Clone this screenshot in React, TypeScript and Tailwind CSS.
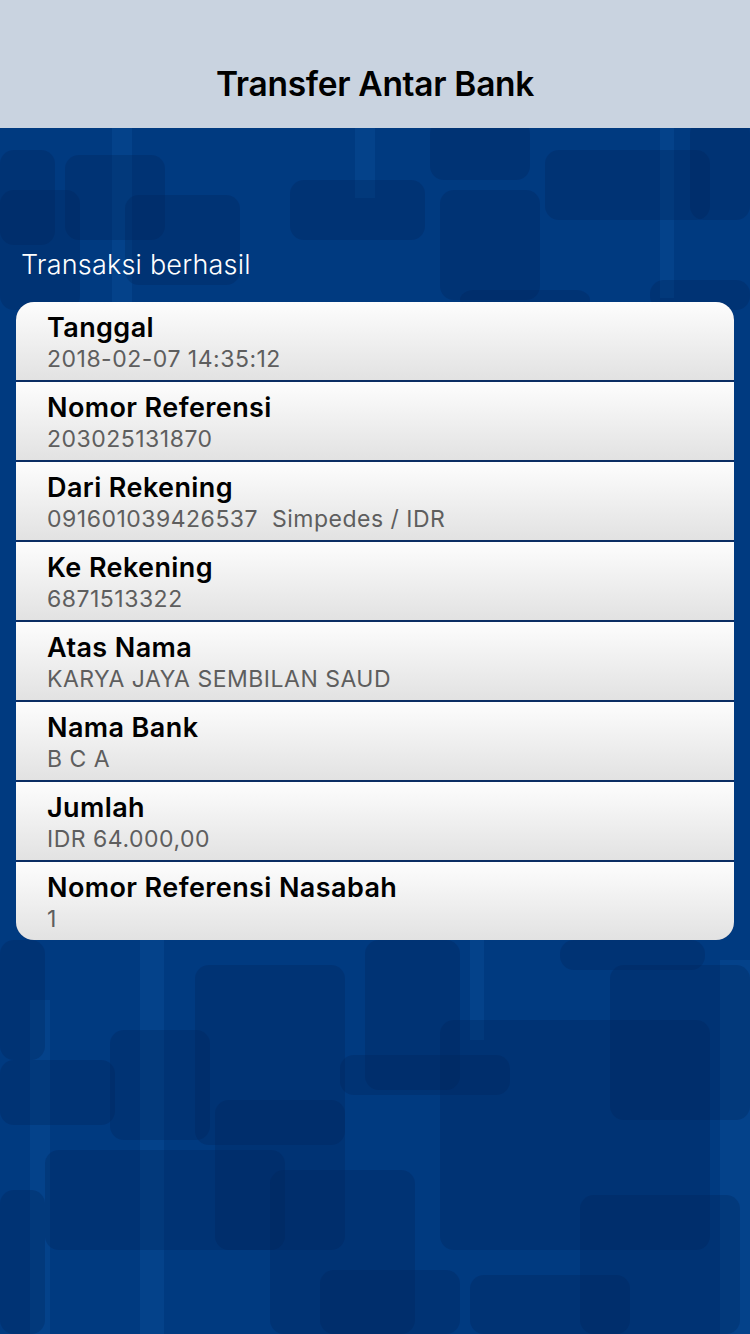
import React from "react";

const rows = [
  { label: "Tanggal", value: "2018-02-07 14:35:12" },
  { label: "Nomor Referensi", value: "203025131870" },
  { label: "Dari Rekening", value: "091601039426537  Simpedes / IDR" },
  { label: "Ke Rekening", value: "6871513322" },
  { label: "Atas Nama", value: "KARYA JAYA SEMBILAN SAUD" },
  { label: "Nama Bank", value: "B C A" },
  { label: "Jumlah", value: "IDR 64.000,00" },
  { label: "Nomor Referensi Nasabah", value: "1" },
];

// decorative tiles of the background artwork: [x, y, w, h]
const darkTiles: number[][] = [
  [0, 150, 55, 95], [65, 155, 100, 85], [0, 190, 80, 120], [125, 195, 115, 90],
  [290, 180, 135, 60], [430, 120, 100, 60], [545, 150, 165, 70], [440, 190, 100, 110],
  [460, 290, 130, 20], [650, 280, 100, 30], [690, 120, 60, 100],
  [0, 940, 45, 120], [195, 965, 150, 180], [340, 1055, 170, 40], [440, 1020, 270, 230],
  [610, 965, 140, 155], [0, 1060, 115, 65], [45, 1150, 240, 100], [215, 1100, 130, 150],
  [270, 1170, 145, 164], [580, 1195, 160, 139], [320, 1270, 140, 64], [470, 1275, 160, 59],
  [0, 1190, 45, 144], [560, 940, 145, 30], [365, 940, 95, 150], [110, 1030, 100, 110],
];

const lightStripes: number[][] = [
  [112, 128, 20, 180], [355, 128, 20, 70], [660, 128, 14, 170],
  [140, 940, 24, 394], [470, 940, 14, 100], [720, 960, 30, 374], [30, 1000, 20, 334],
];

function Background() {
  return (
    <svg
      className="absolute inset-0 w-full h-full"
      viewBox="0 0 750 1334"
      preserveAspectRatio="none"
    >
      <rect x="0" y="0" width="750" height="1334" fill="#003a80" />
      {lightStripes.map(([x, y, w, h], i) => (
        <rect key={"l" + i} x={x} y={y} width={w} height={h} fill="#0a4f98" opacity="0.4" />
      ))}
      {darkTiles.map(([x, y, w, h], i) => (
        <rect key={"d" + i} x={x} y={y} width={w} height={h} rx="14" fill="#002458" opacity="0.3" />
      ))}
    </svg>
  );
}

export default function App() {
  return (
    <div
      className="relative w-[750px] h-[1334px] overflow-hidden"
      style={{ fontFamily: "Inter, 'Liberation Sans', sans-serif" }}
    >
      <Background />
      <div className="relative flex flex-col">
        <header className="h-[128px] bg-[#c9d3e0] flex items-center justify-center pt-[40px]">
          <h1 className="text-[33.5px] font-semibold text-black tracking-[-0.3px]">
            Transfer Antar Bank
          </h1>
        </header>

        <p className="mt-[118px] ml-[21px] text-[27px] font-light text-white leading-[38px] tracking-[0.2px]">
          Transaksi berhasil
        </p>

        <div className="mx-[16px] mt-[18px] rounded-[18px] overflow-hidden flex flex-col gap-[2px] bg-[#0b2d63]">
          {rows.map((r) => (
            <div
              key={r.label}
              className="h-[78px] bg-gradient-to-b from-[#fdfdfd] to-[#e2e2e2] pl-[31px] flex flex-col pt-[9px]"
            >
              <span className="text-[27px] font-semibold text-black leading-[33px] tracking-[0.4px]">
                {r.label}
              </span>
              <span className="text-[23px] text-[#5e5e5e] leading-[30px] tracking-[0.5px] whitespace-pre">
                {r.value}
              </span>
            </div>
          ))}
        </div>
      </div>
    </div>
  );
}
